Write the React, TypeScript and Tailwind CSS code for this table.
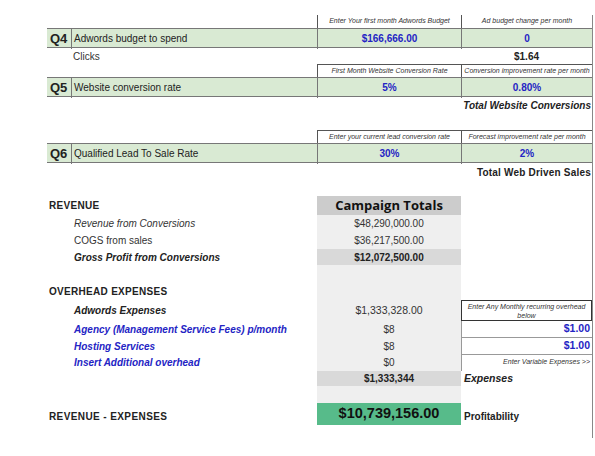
import React from "react";

const cols = "grid grid-cols-[24px_246px_144px_131px]";

const HeaderRow = ({ a, b, top }: { a: string; b: string; top?: boolean }) => (
  <div className={`${cols} h-[13px]`}>
    <div className="col-span-2" />
    <div
      className={`border-l border-[#555] flex items-center justify-center italic text-[7px] text-[#333] whitespace-nowrap ${
        top ? "border-t" : ""
      }`}
    >
      {a}
    </div>
    <div
      className={`border-l border-[#555] flex items-center justify-center italic text-[7px] text-[#333] whitespace-nowrap ${
        top ? "border-t" : ""
      }`}
    >
      {b}
    </div>
  </div>
);

const QuestionRow = ({ q, label, a, b }: { q: string; label: string; a: string; b: string }) => (
  <div className={`${cols} h-[20px] bg-[#d9ead3] border-y border-[#777]`}>
    <div className="flex items-center pl-[3px] text-[13px] font-bold text-[#222]">{q}</div>
    <div className="border-l border-[#777] flex items-center pl-[2px] text-[10px] text-[#222]">
      {label}
    </div>
    <div className="border-l border-[#777] flex items-center justify-center text-[10px] font-bold text-[#2424c4]">
      {a}
    </div>
    <div className="border-l border-[#777] flex items-center justify-center text-[10px] font-bold text-[#2424c4]">
      {b}
    </div>
  </div>
);

// rows of the totals block: label / grey column / right cell
const TotalsRow = ({
  h,
  label,
  value,
  right,
  labelClass = "",
  valueClass = "bg-[#efefef]",
}: {
  h: string;
  label?: React.ReactNode;
  value?: React.ReactNode;
  right?: React.ReactNode;
  labelClass?: string;
  valueClass?: string;
}) => (
  <div className={`${cols} ${h}`}>
    <div className={`col-span-2 flex items-center text-[10px] ${labelClass}`}>{label}</div>
    <div className={`flex items-center justify-center text-[10px] text-[#333] ${valueClass}`}>
      {value}
    </div>
    {right ?? <div />}
  </div>
);

export default function App() {
  return (
    <div className="w-[595px] h-[456px] bg-white pt-[15px] pl-[47px] font-['Liberation_Sans',Arial,sans-serif] text-[#222]">
      <div className="w-[546px] border-r border-[#888]">
        <HeaderRow a="Enter Your first month Adwords Budget" b="Ad budget change per month" />
        <QuestionRow q="Q4" label="Adwords budget to spend" a="$166,666.00" b="0" />

        {/* clicks */}
        <div className={`${cols} h-[16px]`}>
          <div />
          <div className="flex items-center pl-[2px] text-[10px] text-[#333]">Clicks</div>
          <div />
          <div className="flex items-center justify-center text-[10px] font-bold">$1.64</div>
        </div>

        <HeaderRow top a="First Month Website Conversion Rate" b="Conversion improvement rate per month" />
        <QuestionRow q="Q5" label="Website conversion rate" a="5%" b="0.80%" />

        <div className="h-[17px] flex items-center justify-end pr-[1px] text-[10px] font-bold italic">
          Total Website Conversions
        </div>
        <div className="h-[16px]" />

        <HeaderRow top a="Enter your current lead conversion rate" b="Forecast improvement rate per month" />
        <QuestionRow q="Q6" label="Qualified Lead To Sale Rate" a="30%" b="2%" />

        <div className="h-[18px] flex items-center justify-end pr-[1px] text-[10px] font-bold tracking-[0.2px]">
          Total Web Driven Sales
        </div>
        <div className="h-[15px]" />

        {/* revenue block */}
        <TotalsRow
          h="h-[19px]"
          label={<span className="pl-[2px] font-bold tracking-[0.3px]">REVENUE</span>}
          value={
            <span className="font-['Open_Sans',sans-serif] font-bold text-[13px] text-[#111]">
              Campaign Totals
            </span>
          }
          valueClass="bg-[#cccccc]"
        />
        <TotalsRow
          h="h-[17px]"
          label={<span className="pl-[27px] italic text-[#333]">Revenue from Conversions</span>}
          value="$48,290,000.00"
        />
        <TotalsRow
          h="h-[17px]"
          label={<span className="pl-[27px] text-[#333]">COGS from sales</span>}
          value="$36,217,500.00"
        />
        <TotalsRow
          h="h-[16px]"
          label={<span className="pl-[27px] font-bold italic">Gross Profit from Conversions</span>}
          value={<span className="font-bold text-[#222]">$12,072,500.00</span>}
          valueClass="bg-[#d9d9d9]"
        />
        <TotalsRow h="h-[18px]" />

        {/* overhead block */}
        <TotalsRow
          h="h-[17px]"
          label={<span className="pl-[2px] font-bold tracking-[0.3px]">OVERHEAD EXPENSES</span>}
        />
        <TotalsRow
          h="h-[21px]"
          label={<span className="pl-[27px] font-bold italic">Adwords Expenses</span>}
          value={<span className="text-[10.5px]">$1,333,328.00</span>}
          right={
            <div className="border border-[#333] flex flex-col items-center justify-center leading-[9px] italic text-[7px] text-[#333]">
              <span>Enter Any Monthly recurring overhead</span>
              <span>below</span>
            </div>
          }
        />
        <TotalsRow
          h="h-[17px]"
          label={
            <span className="pl-[27px] font-bold italic text-[#2424c4]">
              Agency (Management Service Fees) p/month
            </span>
          }
          value="$8"
          right={
            <div className="border-l border-b border-[#999] flex items-center justify-end pr-[2px] text-[10.5px] font-bold text-[#2424c4]">
              $1.00
            </div>
          }
        />
        <TotalsRow
          h="h-[16px]"
          label={<span className="pl-[27px] font-bold italic text-[#2424c4]">Hosting Services</span>}
          value="$8"
          right={
            <div className="border-l border-b border-[#999] flex items-center justify-end pr-[2px] text-[10.5px] font-bold text-[#2424c4]">
              $1.00
            </div>
          }
        />
        <TotalsRow
          h="h-[17px]"
          label={
            <span className="pl-[27px] font-bold italic text-[#2424c4]">Insert Additional overhead</span>
          }
          value="$0"
          right={
            <div className="border-l border-[#999] flex items-center justify-end pr-[2px] italic text-[7px] text-[#333]">
              Enter Variable Expenses &gt;&gt;
            </div>
          }
        />
        <TotalsRow
          h="h-[15px]"
          value={<span className="font-bold text-[#222]">$1,333,344</span>}
          valueClass="bg-[#d9d9d9]"
          right={
            <div className="flex items-center pl-[3px] text-[10.5px] font-bold italic">Expenses</div>
          }
        />
        <TotalsRow h="h-[17px]" />
        <TotalsRow
          h="h-[21px]"
          label={
            <span className="pl-[2px] pt-[5px] font-bold tracking-[0.4px]">REVENUE - EXPENSES</span>
          }
          value={<span className="text-[14.5px] font-bold text-[#111]">$10,739,156.00</span>}
          valueClass="bg-[#57bb8a]"
          right={
            <div className="flex items-center pl-[3px] pt-[5px] text-[10px] font-bold">Profitability</div>
          }
        />
        <div className="h-[14px]" />
      </div>
    </div>
  );
}
